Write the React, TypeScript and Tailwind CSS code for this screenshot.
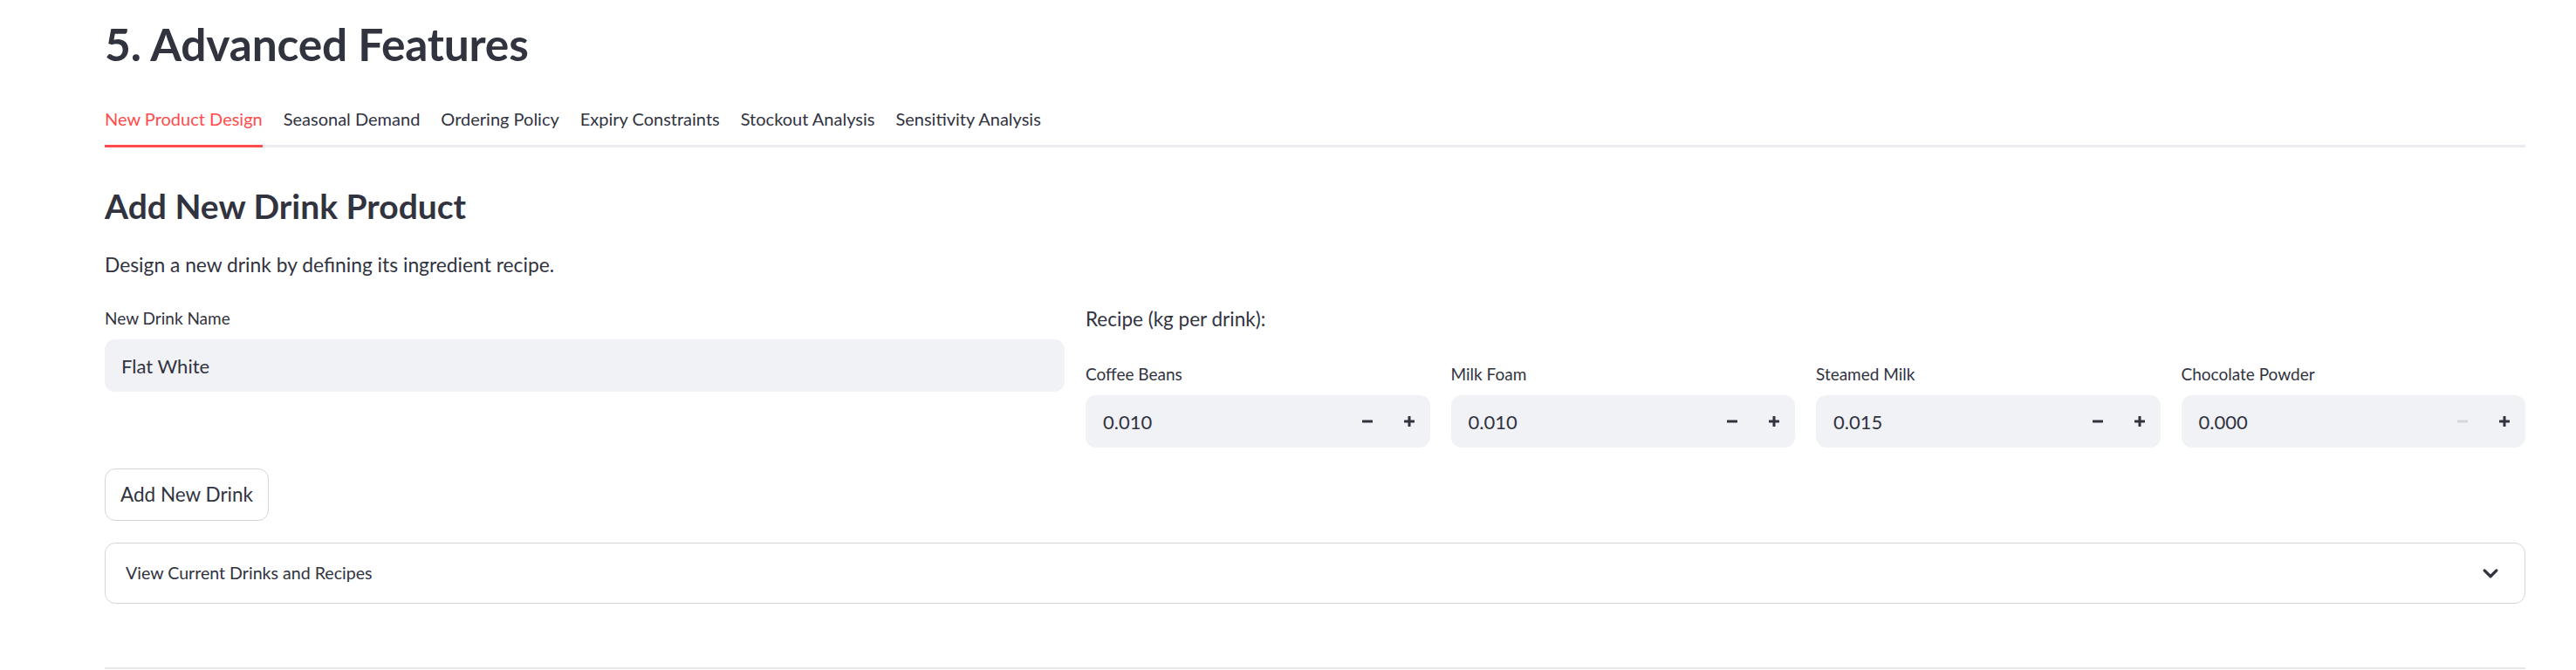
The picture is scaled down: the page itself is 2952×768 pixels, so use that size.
import React from "react";

function Minus({ disabled }: { disabled?: boolean }) {
  return (
    <svg width="14" height="14" viewBox="0 0 14 14" aria-hidden="true">
      <rect x="1" y="5.5" width="12" height="3" rx="0.5" fill={disabled ? "#d3d6de" : "#31333f"} />
    </svg>
  );
}

function Plus() {
  return (
    <svg width="14" height="14" viewBox="0 0 14 14" aria-hidden="true">
      <rect x="1" y="5.5" width="12" height="3" rx="0.5" fill="#31333f" />
      <rect x="5.5" y="1" width="3" height="12" rx="0.5" fill="#31333f" />
    </svg>
  );
}

function NumberField({ label, value, minDisabled }: { label: string; value: string; minDisabled?: boolean }) {
  return (
    <div className="flex flex-col">
      <div className="h-[24px] text-[19px] leading-[24px] mt-[69px]">{label}</div>
      <div className="mt-[12px] flex h-[60px] items-center rounded-[12px] bg-[#f0f2f6]">
        <div className="flex-1 pl-[20px] text-[22px]">{value}</div>
        <div className="flex h-full w-[48px] items-center justify-center">
          <Minus disabled={minDisabled} />
        </div>
        <div className="flex h-full w-[48px] items-center justify-center">
          <Plus />
        </div>
      </div>
    </div>
  );
}

export default function App() {
  const tabs = [
    "New Product Design",
    "Seasonal Demand",
    "Ordering Policy",
    "Expiry Constraints",
    "Stockout Analysis",
    "Sensitivity Analysis",
  ];
  return (
    <div className="min-h-screen bg-white text-[#31333f] [font-family:Lato,'Noto_Sans',sans-serif]">
      <div className="pl-[120px] pr-[58px]">
        <h2 className="pt-[18px] h-[82px] text-[51.5px] leading-[64px] font-bold tracking-[-0.2px]">5. Advanced Features</h2>

        <div className="mt-[24px] flex h-[63px] gap-[24px] border-b-[3px] border-[#ebecef]">
          {tabs.map((t, i) => (
            <div
              key={t}
              className={
                i === 0
                  ? "relative flex h-[60px] items-center text-[20px] text-[#ff4b4b]"
                  : "relative flex h-[60px] items-center text-[20px] text-[#31333f]"
              }
            >
              {t}
              {i === 0 && <div className="absolute left-0 right-0 -bottom-[3px] h-[3px] bg-[#ff4b4b]" />}
            </div>
          ))}
        </div>

        <h3 className="mt-[42px] h-[50px] text-[39px] leading-[50px] font-bold">Add New Drink Product</h3>

        <p className="mt-[24px] h-[36px] text-[22.8px] leading-[36px]">Design a new drink by defining its ingredient recipe.</p>

        <div className="mt-[27px] grid grid-cols-[2fr_3fr] gap-[24px]">
          <div className="flex flex-col">
            <div className="mt-[5px] h-[24px] text-[19px] leading-[24px]">New Drink Name</div>
            <div className="mt-[12px] flex h-[60px] items-center rounded-[12px] bg-[#f0f2f6] pl-[19px] text-[22px]">
              Flat White
            </div>
          </div>
          <div className="relative">
            <div className="absolute left-0 top-0 h-[36px] text-[22.5px] leading-[36px]">Recipe (kg per drink):</div>
            <div className="grid grid-cols-4 gap-[24px]">
              <NumberField label="Coffee Beans" value="0.010" />
              <NumberField label="Milk Foam" value="0.010" />
              <NumberField label="Steamed Milk" value="0.015" />
              <NumberField label="Chocolate Powder" value="0.000" minDisabled />
            </div>
          </div>
        </div>

        <button className="mt-[24px] flex h-[60px] items-center rounded-[12px] border border-[#d6d6d9] bg-white px-[17px] text-[22.5px] text-[#31333f]">
          Add New Drink
        </button>

        <div className="mt-[25px] flex h-[70px] items-center justify-between rounded-[12px] border border-[#d6d6d9] pl-[23px] pr-[24px]">
          <span className="text-[19.6px]">View Current Drinks and Recipes</span>
          <svg width="30" height="30" viewBox="0 0 24 24" fill="none" aria-hidden="true">
            <path d="M6.5 9.5l5.5 5.5 5.5-5.5" stroke="#31333f" strokeWidth="2.6" strokeLinecap="round" strokeLinejoin="round" />
          </svg>
        </div>

        <div className="mt-[73px] h-[2px] bg-[#e6e7ea]" />
      </div>
    </div>
  );
}
